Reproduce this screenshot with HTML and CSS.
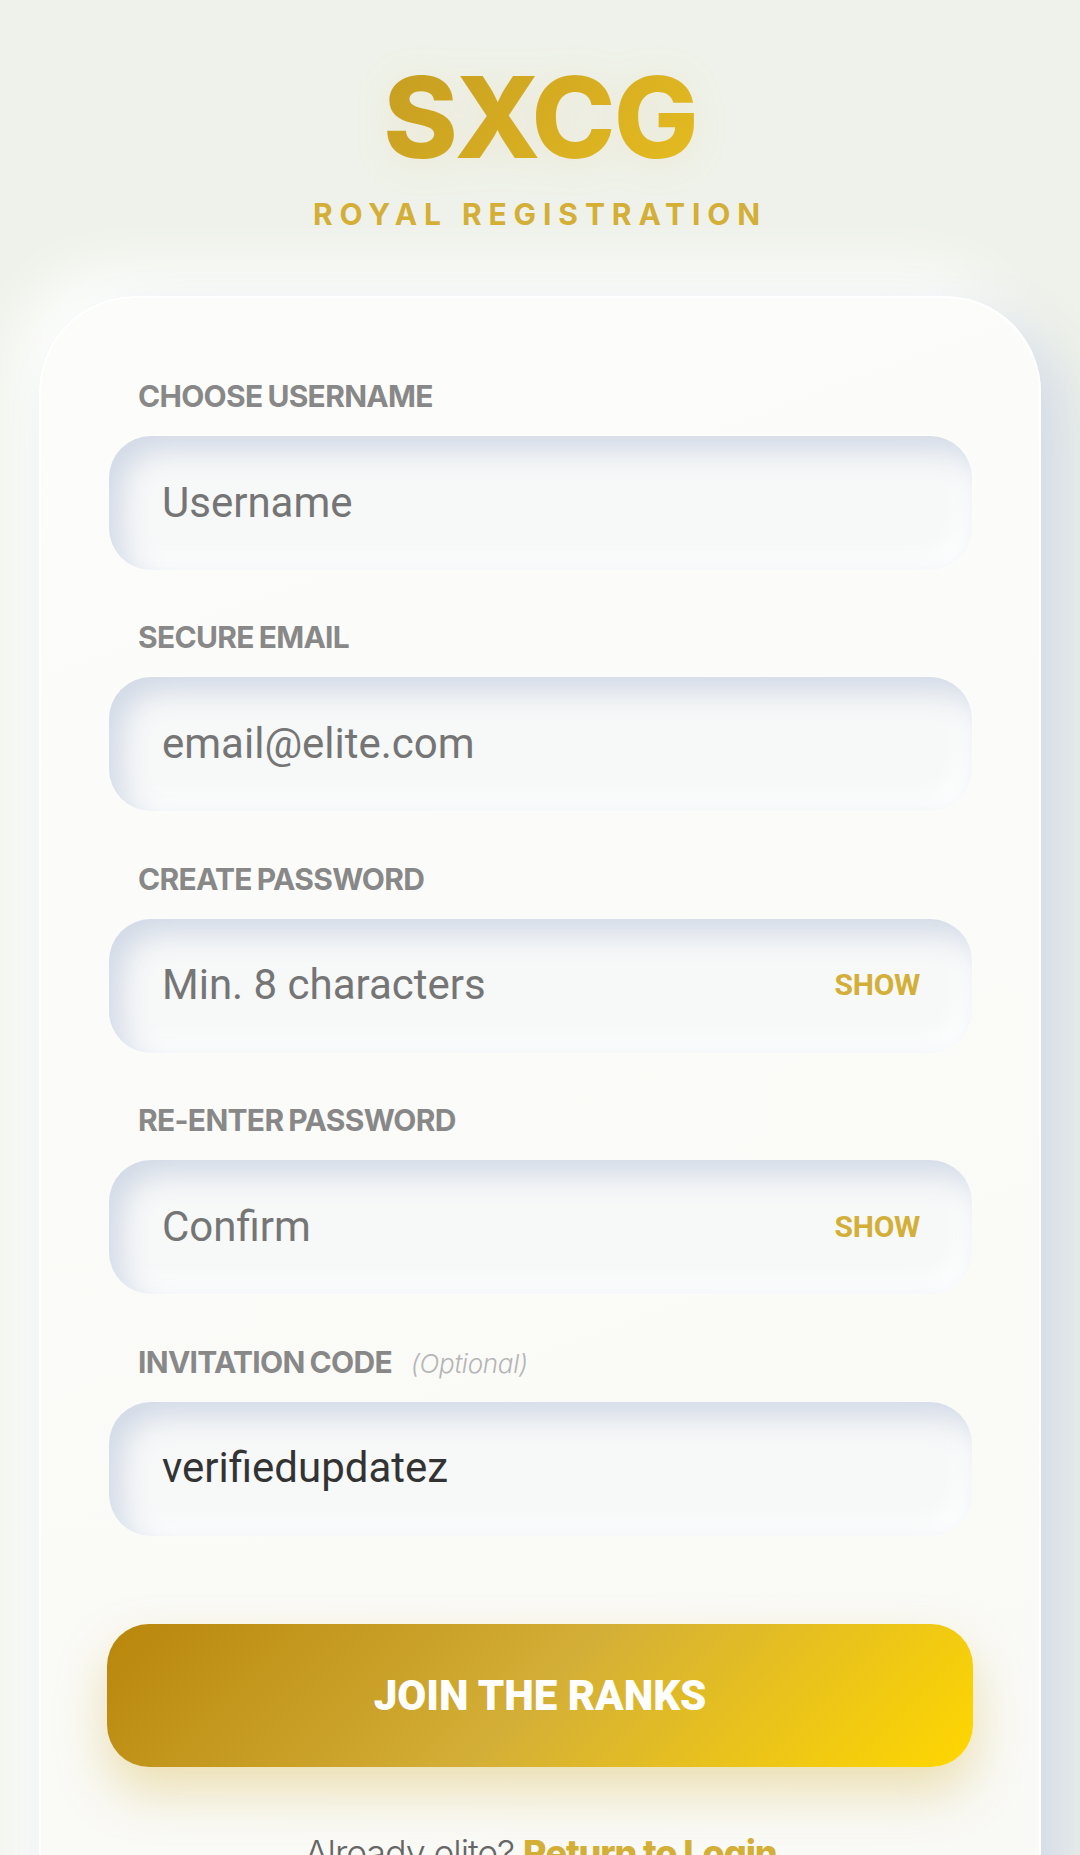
FILE: index.html
```html
<!DOCTYPE html>
<html lang="en">
<head>
    <meta charset="UTF-8">
    <meta name="viewport" content="width=device-width, initial-scale=1.0">
    <title>SXCG Royal Registration</title>
    <link rel="stylesheet" href="styles.css">
</head>
<body>

    <!-- Brand -->
    <div class="brand">
        <h1 class="logo">SXCG</h1>
        <p class="tagline">ROYAL REGISTRATION</p>
    </div>

    <!-- Register form -->
    <div class="card">
        <div class="field">
            <label class="field-label">CHOOSE USERNAME</label>
            <div class="input-box"><span class="placeholder">Username</span></div>
        </div>
        <div class="field">
            <label class="field-label">SECURE EMAIL</label>
            <div class="input-box"><span class="placeholder">email@elite.com</span></div>
        </div>
        <div class="field">
            <label class="field-label">CREATE PASSWORD</label>
            <div class="input-box"><span class="placeholder">Min. 8 characters</span><span class="show-toggle">SHOW</span></div>
        </div>
        <div class="field">
            <label class="field-label">RE-ENTER PASSWORD</label>
            <div class="input-box"><span class="placeholder">Confirm</span><span class="show-toggle">SHOW</span></div>
        </div>
        <div class="field">
            <label class="field-label">INVITATION CODE <span class="optional">(Optional)</span></label>
            <div class="input-box"><span class="value">verifiedupdatez</span></div>
        </div>
        <button class="join-button">JOIN THE RANKS</button>
        <p class="login-line">Already elite? <a class="login-link">Return to Login</a></p>
    </div>

</body>
</html>
```

FILE: styles.css
```css
html, body {
    height: 1855px;
    overflow: hidden;
}
body {
    margin: 0;
    background-color: #eff2ea;
    font-family: "Inter", "Noto Sans", sans-serif;
}
.brand {
    height: 296px;
    box-sizing: border-box;
    padding-top: 55px;
    text-align: center;
}
.logo {
    margin: 0;
    font-size: 113px;
    line-height: 124px;
    font-weight: 800;
    letter-spacing: -2px;
    color: #d4af37;
    background: linear-gradient(135deg, #c59d22, #e6bc20);
    -webkit-background-clip: text;
    background-clip: text;
    -webkit-text-fill-color: transparent;
    filter: drop-shadow(0 4px 18px rgba(212, 175, 55, 0.12));
    display: inline-block;
}
.tagline {
    margin: 18px 0 0;
    font-size: 30px;
    line-height: 34px;
    font-weight: 700;
    letter-spacing: 6.9px;
    color: #d4af37;
}
.card {
    width: 1002px;
    margin-left: 39px;
    box-sizing: border-box;
    padding: 80px 67px 0 68px;
    height: 1700px;
    border: 2px solid #ffffff;
    border-radius: 96px;
    background: linear-gradient(160deg, #fcfdfb, #f9f9f5);
    box-shadow: 26px 26px 60px #d1d9e6, -24px -24px 60px #ffffff;
}
.field {
    height: 241.4px;
}
.field-label {
    display: block;
    padding-left: 29px;
    height: 58px;
    font-size: 30px;
    line-height: 36px;
    font-weight: 700;
    letter-spacing: -0.7px;
    word-spacing: -1.5px;
    color: #888888;
}
.optional {
    margin-left: 14px;
    font-size: 26px;
    font-weight: 300;
    font-style: italic;
    letter-spacing: -0.3px;
    color: #b5b5b5;
}
.input-box {
    height: 134px;
    box-sizing: border-box;
    padding: 0 52px 2px 53px;
    display: flex;
    align-items: center;
    justify-content: space-between;
    border-radius: 42px;
    background-color: #f7f8f8;
    box-shadow: inset 12px 14px 30px #d1d9e6, inset -10px -10px 26px #ffffff, 0 0 2px #ffffff;
    font-family: "Roboto", sans-serif;
    font-size: 42px;
}
.placeholder {
    color: #757575;
}
.value {
    color: #333333;
}
.show-toggle {
    font-size: 30px;
    font-weight: 700;
    letter-spacing: -0.3px;
    color: #d4af37;
}
.join-button {
    display: block;
    width: 866px;
    height: 143px;
    margin: 39px 0 0 -2px;
    border: none;
    border-radius: 42px;
    background: linear-gradient(135deg, #b8860b, #d4af37 50%, #ffd700);
    box-shadow: 0 24px 50px rgba(212, 175, 55, 0.36);
    font-family: "Roboto", sans-serif;
    font-size: 42px;
    font-weight: 900;
    color: #ffffff;
}
.login-line {
    margin: 64px 0 0;
    text-align: center;
    font-size: 36px;
    font-weight: 300;
    letter-spacing: -1.1px;
    color: #666666;
}
.login-link {
    font-weight: 800;
    color: #d4af37;
}
```
